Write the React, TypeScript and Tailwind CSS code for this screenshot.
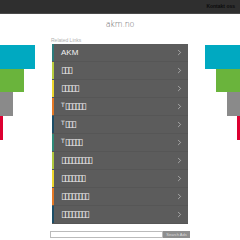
import { ChevronRight } from "lucide-react";

const links = [
    { prefix: "AKM", boxes: 0, color: "bg-[#2b7b7b]" },
    { prefix: "", boxes: 3, color: "bg-[#b8cc3c]" },
    { prefix: "", boxes: 5, color: "bg-[#ecd62c]" },
    { prefix: "T", boxes: 6, color: "bg-[#e57824]" },
    { prefix: "T", boxes: 3, color: "bg-[#1c4d66]" },
    { prefix: "T", boxes: 5, color: "bg-[#2e8a78]" },
    { prefix: "", boxes: 9, color: "bg-[#b0c83c]" },
    { prefix: "", boxes: 7, color: "bg-[#ecd62c]" },
    { prefix: "", boxes: 8, color: "bg-[#e57824]" },
    { prefix: "", boxes: 8, color: "bg-[#1c4d66]" },
];

const App = () => {
    return (
        <div className="h-[240px] w-[240px] overflow-hidden bg-white font-['Liberation_Sans',sans-serif]">
            {/* top bar */}
            <div className="flex h-[14px] items-center justify-end border-b border-[#4a4a4a] bg-[#2f2f2f] pr-[5px]">
                <span className="text-[5px] font-bold text-[#0c0c0c]">Kontakt oss</span>
            </div>

            <div className="flex">
                {/* left blocks */}
                <div className="flex w-[50px] flex-col items-start pt-[31px]">
                    <div className="h-[24px] w-[35px] bg-[#00a9c1]" />
                    <div className="h-[23px] w-[24px] bg-[#6ab43c]" />
                    <div className="h-[24px] w-[13px] bg-[#8a8a8a]" />
                    <div className="h-[24px] w-[3px] bg-[#dd0031]" />
                </div>

                {/* center */}
                <div className="flex w-[140px] flex-col">
                    <p className="mt-[6px] text-center font-['DejaVu_Sans',sans-serif] text-[8px] font-light leading-[10px] tracking-[-0.2px] text-[#666]">
                        akm.no
                    </p>
                    <p className="mt-[7px] pl-[1px] text-[5px] leading-[6px] text-[#b0b0b0]">Related Links</p>
                    <ul className="ml-[2px] mt-[1px] w-[136px] bg-[#5c5c5c]">
                        {links.map((link, i) => (
                            <li key={i} className="flex h-[18px] items-stretch border-b border-[#565656]">
                                <div className={`w-[2px] ${link.color}`} />
                                <div className="flex flex-1 items-center justify-between pl-[7px] pr-[4px]">
                                    <span className="font-['DejaVu_Sans',sans-serif] text-[9px] leading-none text-[#f2f2f2]">
                                        {link.prefix && (
                                            <span
                                                className={
                                                    link.boxes
                                                        ? "align-top text-[6px]"
                                                        : "font-['Liberation_Sans',sans-serif] text-[8px]"
                                                }
                                            >
                                                {link.prefix}
                                            </span>
                                        )}
                                        <span className="tracking-[-1.6px]">{"▯".repeat(link.boxes)}</span>
                                    </span>
                                    <ChevronRight size={9} strokeWidth={1.5} className="text-[#dddddd]" />
                                </div>
                            </li>
                        ))}
                    </ul>
                    <div className="mt-[7px] flex h-[7px]">
                        <div className="w-[113px] border border-[#bbb] bg-white" />
                        <div className="flex w-[27px] items-center justify-center bg-[#8e8e8e] text-[4px] text-[#ddd]">
                            Search Ads
                        </div>
                    </div>
                </div>

                {/* right blocks */}
                <div className="flex w-[50px] flex-col items-end pt-[31px]">
                    <div className="h-[24px] w-[35px] bg-[#00a9c1]" />
                    <div className="h-[23px] w-[24px] bg-[#6ab43c]" />
                    <div className="h-[24px] w-[13px] bg-[#8a8a8a]" />
                    <div className="h-[24px] w-[3px] bg-[#dd0031]" />
                </div>
            </div>
        </div>
    );
};

export default App;
